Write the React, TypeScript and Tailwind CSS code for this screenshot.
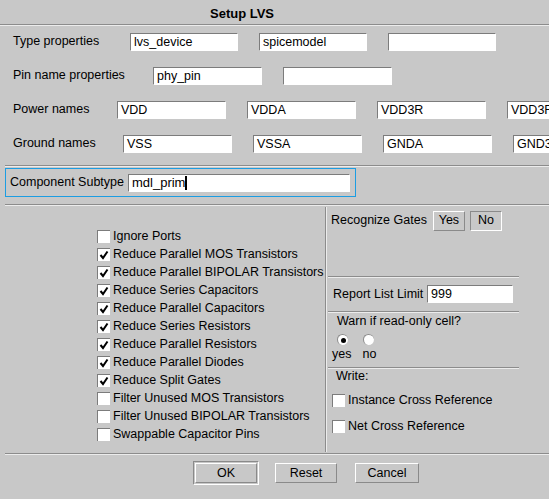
import type { ReactNode } from "react";

function HLine({ className = "" }: { className?: string }) {
  return <div className={`h-[2px] shrink-0 border-t border-t-[#8c8c8c] border-b border-b-[#ececec] ${className}`} />;
}

function Field({ value = "", w, big = false, caret = false }: { value?: string; w: string; big?: boolean; caret?: boolean }) {
  return (
    <div
      className={`${w} h-[18px] shrink-0 bg-white border-t border-l border-t-[#7c7c7c] border-l-[#7c7c7c] border-b border-r border-b-white border-r-white pl-[3px] flex items-center overflow-hidden whitespace-nowrap ${
        big ? "text-[13px]" : "text-[12.5px]"
      }`}
    >
      <span className="leading-[16px]">{value}</span>
      {caret && <span className="inline-block w-[2px] h-[14px] bg-black" />}
    </div>
  );
}

function Check({ checked, children }: { checked: boolean; children: ReactNode }) {
  return (
    <div className="h-[18px] flex items-center gap-[3px] whitespace-nowrap">
      <div className="w-[13px] h-[13px] shrink-0 bg-white border-t border-l border-[#7c7c7c] border-b-0 border-r-0 flex items-center justify-center">
        {checked && (
          <svg width="10" height="10" viewBox="0 0 10 10">
            <path d="M1.5 5 L4 8 L8.5 1.5" fill="none" stroke="#000" strokeWidth="2" />
          </svg>
        )}
      </div>
      <span>{children}</span>
    </div>
  );
}

function Radio({ on }: { on: boolean }) {
  return (
    <div className="w-[11px] h-[11px] rounded-full bg-white border-t border-l border-[#8a8a8a] border-b-0 border-r-0 flex items-center justify-center shrink-0">
      {on && <div className="w-[5px] h-[5px] rounded-full bg-black" />}
    </div>
  );
}

function Btn({ children, w, pressed = false }: { children: ReactNode; w: string; pressed?: boolean }) {
  return (
    <div
      className={`${w} h-[20px] flex items-center justify-center border ${
        pressed ? "border-t-[#8a8a8a] border-l-[#8a8a8a] border-b-white border-r-white" : "border-t-white border-l-white border-b-[#8a8a8a] border-r-[#8a8a8a]"
      }`}
    >
      {children}
    </div>
  );
}

const rows = [
  { label: "Type properties", lw: "w-[117px]", fw: "w-[108px]", values: ["lvs_device", "spicemodel", ""] },
  { label: "Pin name properties", lw: "w-[140px]", fw: "w-[109px]", values: ["phy_pin", ""] },
  { label: "Power names", lw: "w-[104px]", fw: "w-[109px]", values: ["VDD", "VDDA", "VDD3R", "VDD3F"] },
  { label: "Ground names", lw: "w-[110px]", fw: "w-[109px]", values: ["VSS", "VSSA", "GNDA", "GND3"] },
];

const options: [string, boolean][] = [
  ["Ignore Ports", false],
  ["Reduce Parallel MOS Transistors", true],
  ["Reduce Parallel BIPOLAR Transistors", true],
  ["Reduce Series Capacitors", true],
  ["Reduce Parallel Capacitors", true],
  ["Reduce Series Resistors", true],
  ["Reduce Parallel Resistors", true],
  ["Reduce Parallel Diodes", true],
  ["Reduce Split Gates", true],
  ["Filter Unused MOS Transistors", false],
  ["Filter Unused BIPOLAR Transistors", false],
  ["Swappable Capacitor Pins", false],
];

export default function App() {
  return (
    <div className="w-[549px] h-[499px] overflow-hidden bg-[#c8c8c8] text-black text-[12.5px] font-['Liberation_Sans',Arial,sans-serif] flex flex-col">
      <div className="h-[24px] pt-[3px] pl-[210px] flex items-center font-bold text-[13px]">Setup LVS</div>
      <HLine />

      <div className="pt-[7px] flex flex-col gap-[16px]">
        {rows.map((r) => (
          <div key={r.label} className="h-[18px] pl-[13px] flex items-center whitespace-nowrap">
            <span className={`${r.lw} shrink-0 -mt-[2px]`}>{r.label}</span>
            <div className="flex gap-[21px]">
              {r.values.map((v, i) => (
                <Field key={i} value={v} w={r.fw} />
              ))}
            </div>
          </div>
        ))}
      </div>

      <HLine className="mt-[12px] ml-[5px]" />

      <div className="mt-[1px] ml-[5px] w-[351px] h-[29px] shrink-0 border border-[#1c9de2] flex items-center pl-[4px] whitespace-nowrap">
        <span className="w-[118px] shrink-0 text-[12.5px]">Component Subtype</span>
        <Field value="mdl_prim" w="w-[222px]" big caret />
      </div>

      <HLine className="mt-[7px] ml-[5px]" />

      <div className="h-[247px] shrink-0 flex ml-[5px]">
        <div className="w-[320px] shrink-0 pl-[92px] pt-[21px] flex flex-col">
          {options.map(([t, c]) => (
            <Check key={t} checked={c}>
              {t}
            </Check>
          ))}
        </div>
        <div className="w-[2px] my-[1px] border-l border-l-[#8c8c8c] border-r border-r-[#ececec]" />
        <div className="w-[192px] shrink-0 flex flex-col">
          <div className="pt-[4px] pl-[4px] h-[21px] flex items-center gap-[5px] box-content whitespace-nowrap">
            <span className="mr-[1px]">Recognize Gates</span>
            <Btn w="w-[32px]">Yes</Btn>
            <Btn w="w-[32px]" pressed>
              No
            </Btn>
          </div>
          <HLine className="mt-[45px] ml-[1px]" />
          <div className="mt-[7px] h-[18px] pl-[6px] flex items-center whitespace-nowrap">
            <span className="w-[94px] shrink-0">Report List Limit</span>
            <Field value="999" w="w-[86px]" />
          </div>
          <HLine className="mt-[8px] ml-[1px]" />
          <div className="mt-[1px] h-[14px] pl-[10px] flex items-center">Warn if read-only cell?</div>
          <div className="mt-[6px] pl-[10px] flex gap-[15px]">
            <Radio on />
            <Radio on={false} />
          </div>
          <div className="mt-[2px] h-[14px] pl-[5px] flex items-center">
            <span>yes</span>
            <span className="ml-[11px]">no</span>
          </div>
          <HLine className="mt-[6px] ml-[1px]" />
          <div className="h-[14px] pl-[9px] flex items-center">Write:</div>
          <div className="mt-[8px] pl-[5px]">
            <Check checked={false}>Instance Cross Reference</Check>
          </div>
          <div className="mt-[8px] pl-[5px]">
            <Check checked={false}>Net Cross Reference</Check>
          </div>
        </div>
      </div>

      <HLine className="ml-[5px]" />

      <div className="mt-[6px] h-[24px] pl-[193px] flex items-center">
        <div className="w-[66px] h-[24px] border border-t-[#8a8a8a] border-l-[#8a8a8a] border-b-white border-r-white p-[1px]">
          <div className="h-full flex items-center justify-center border border-t-white border-l-white border-b-[#8a8a8a] border-r-[#8a8a8a]">
            OK
          </div>
        </div>
        <div className="ml-[16px]">
          <Btn w="w-[62px]">Reset</Btn>
        </div>
        <div className="ml-[18px]">
          <Btn w="w-[64px]">Cancel</Btn>
        </div>
      </div>
    </div>
  );
}
